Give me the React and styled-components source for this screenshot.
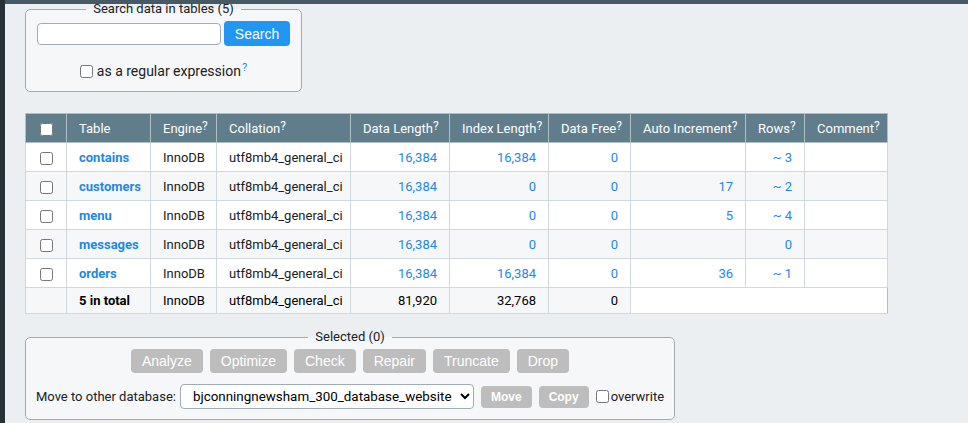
import styled, { createGlobalStyle } from "styled-components";

const GlobalStyle = createGlobalStyle`
    html, body {
        margin: 0;
        background: #eceff1;
    }
    body {
        font-family: Roboto, "Liberation Sans", Arial, sans-serif;
        font-size: 14px;
        color: #212121;
    }
`;

const TABLES = [
    { name: "contains", data: "16,384", index: "16,384", free: "0", auto: "", rows: "~ 3" },
    { name: "customers", data: "16,384", index: "0", free: "0", auto: "17", rows: "~ 2" },
    { name: "menu", data: "16,384", index: "0", free: "0", auto: "5", rows: "~ 4" },
    { name: "messages", data: "16,384", index: "0", free: "0", auto: "", rows: "0" },
    { name: "orders", data: "16,384", index: "16,384", free: "0", auto: "36", rows: "~ 1" },
];

const COLS = [41, 84, 66, 134, 99, 99, 82, 115, 59, 83];

const ACTIONS = ["Analyze", "Optimize", "Check", "Repair", "Truncate", "Drop"];

const App = () => {
    return (
        <>
            <GlobalStyle />
            <S.Page>
                <S.SideStrip />
                <S.TopBar />
                <S.Main>
                    <S.Fieldset $width="277px">
                        <S.Legend>Search data in tables (5)</S.Legend>
                        <S.SearchRow>
                            <S.TextInput type="text" />
                            <S.BlueButton>Search</S.BlueButton>
                        </S.SearchRow>
                        <S.RegexRow>
                            <S.Check type="checkbox" />
                            as a regular expression<S.HelpLink>?</S.HelpLink>
                        </S.RegexRow>
                    </S.Fieldset>

                    <S.Table>
                        <colgroup>
                            {COLS.map((w, i) => (
                                <S.Col key={i} $width={w} />
                            ))}
                        </colgroup>
                        <thead>
                            <tr>
                                <S.Th $center>
                                    <S.Check type="checkbox" $cell />
                                </S.Th>
                                <S.Th>Table</S.Th>
                                <S.Th>Engine<S.Sup>?</S.Sup></S.Th>
                                <S.Th>Collation<S.Sup>?</S.Sup></S.Th>
                                <S.Th>Data Length<S.Sup>?</S.Sup></S.Th>
                                <S.Th>Index Length<S.Sup>?</S.Sup></S.Th>
                                <S.Th>Data Free<S.Sup>?</S.Sup></S.Th>
                                <S.Th>Auto Increment<S.Sup>?</S.Sup></S.Th>
                                <S.Th>Rows<S.Sup>?</S.Sup></S.Th>
                                <S.Th>Comment<S.Sup>?</S.Sup></S.Th>
                            </tr>
                        </thead>
                        <tbody>
                            {TABLES.map((t, i) => (
                                <S.Row key={t.name} $odd={i % 2 === 1}>
                                    <S.Td $center>
                                        <S.Check type="checkbox" $cell />
                                    </S.Td>
                                    <S.Td>
                                        <S.NameLink>{t.name}</S.NameLink>
                                    </S.Td>
                                    <S.Td>InnoDB</S.Td>
                                    <S.Td>utf8mb4_general_ci</S.Td>
                                    <S.Td $right><S.Link>{t.data}</S.Link></S.Td>
                                    <S.Td $right><S.Link>{t.index}</S.Link></S.Td>
                                    <S.Td $right><S.Link>{t.free}</S.Link></S.Td>
                                    <S.Td $right><S.Link>{t.auto}</S.Link></S.Td>
                                    <S.Td $right><S.Link>{t.rows}</S.Link></S.Td>
                                    <S.Td></S.Td>
                                </S.Row>
                            ))}
                            <S.TotalRow>
                                <S.TotalTd></S.TotalTd>
                                <S.TotalTd $bold>5 in total</S.TotalTd>
                                <S.TotalTd>InnoDB</S.TotalTd>
                                <S.TotalTd>utf8mb4_general_ci</S.TotalTd>
                                <S.TotalTd $right>81,920</S.TotalTd>
                                <S.TotalTd $right>32,768</S.TotalTd>
                                <S.TotalTd $right>0</S.TotalTd>
                                <S.BlankTd colSpan={3}></S.BlankTd>
                            </S.TotalRow>
                        </tbody>
                    </S.Table>

                    <S.Fieldset $width="650px" $gap>
                        <S.Legend>Selected (0)</S.Legend>
                        <S.ActionRow>
                            {ACTIONS.map((a) => (
                                <S.GrayButton key={a}>{a}</S.GrayButton>
                            ))}
                        </S.ActionRow>
                        <S.MoveRow>
                            <S.MoveLabel>Move to other database:</S.MoveLabel>
                            <S.Select defaultValue="web">
                                <option value="web">bjconningnewsham_300_database_website</option>
                            </S.Select>
                            <S.SmallButton>Move</S.SmallButton>
                            <S.SmallButton>Copy</S.SmallButton>
                            <S.OverwriteLabel>
                                <S.Check type="checkbox" $tight />
                                overwrite
                            </S.OverwriteLabel>
                        </S.MoveRow>
                    </S.Fieldset>
                </S.Main>
            </S.Page>
        </>
    );
};
export default App;

const Page = styled.div`
    display: flex;
    min-height: 100vh;
`;
const SideStrip = styled.div`
    width: 5px;
    flex: none;
    background: #263238;
`;
const TopBar = styled.div`
    position: fixed;
    top: 0;
    left: 5px;
    right: 0;
    height: 4px;
    background: #455a64;
`;
const Main = styled.div`
    flex: 1;
    padding: 1px 0 0 20px;
`;
const Fieldset = styled.fieldset`
    box-sizing: border-box;
    width: ${(p) => p.$width};
    min-width: 0;
    margin: ${(p) => (p.$gap ? "15px 0 0" : "0")};
    padding: 4px 12px 10px;
    border: 1px solid #9eadb5;
    border-radius: 5px;
    background: #f5f7f8;
    display: flex;
    flex-direction: column;
    align-items: center;
`;
const Legend = styled.legend`
    margin: 0 auto;
    padding: 0 7px;
    font-size: 13px;
    line-height: 16px;
    color: #212121;
`;
const SearchRow = styled.div`
    display: flex;
    align-items: center;
    gap: 3px;
`;
const TextInput = styled.input`
    box-sizing: border-box;
    width: 184px;
    height: 22px;
    margin: 0;
    border: 1px solid #9eadb5;
    border-radius: 4px;
    background: #fff;
`;
const BlueButton = styled.button`
    height: 25px;
    padding: 0 11px;
    border: none;
    border-radius: 4px;
    background: #2196f3;
    color: #fff;
    font-family: "Liberation Sans", Arial, sans-serif;
    font-size: 14px;
`;
const RegexRow = styled.label`
    display: flex;
    align-items: center;
    margin-top: 15px;
    font-size: 14px;
    line-height: 20px;
    white-space: nowrap;
`;
const Check = styled.input`
    width: 13px;
    height: 13px;
    margin: ${(p) => (p.$cell ? "0" : p.$tight ? "0 2px 0 0" : "0 4px 0 0")};
    vertical-align: middle;
`;
const HelpLink = styled.sup`
    align-self: flex-start;
    color: #1e88e5;
    font-size: 11px;
    line-height: 11px;
    margin-left: 1px;
    margin-top: 1px;
`;
const Table = styled.table`
    margin-top: 21px;
    width: 862px;
    table-layout: fixed;
    border-collapse: collapse;
    border: 1px solid #b0bec5;
    font-size: 13px;
    background: #fff;
`;
const Col = styled.col`
    width: ${(p) => p.$width}px;
`;
const Th = styled.th`
    height: 28px;
    padding: ${(p) => (p.$center ? "0" : "0 12px")};
    background: #607d8b;
    color: #fff;
    font-weight: normal;
    text-align: ${(p) => (p.$center ? "center" : "left")};
    border: 1px solid #b0bec5;
    white-space: nowrap;
`;
const Sup = styled.sup`
    font-size: 12px;
    line-height: 0;
    vertical-align: 3px;
`;
const Row = styled.tr`
    background: ${(p) => (p.$odd ? "#f5f7f8" : "#fff")};
`;
const Td = styled.td`
    height: 28px;
    padding: ${(p) => (p.$center ? "0" : "0 12px")};
    border: 1px solid #cfd8dc;
    text-align: ${(p) => (p.$center ? "center" : p.$right ? "right" : "left")};
    white-space: nowrap;
`;
const Link = styled.a`
    color: #1e88e5;
    text-decoration: none;
`;
const NameLink = styled(Link)`
    font-weight: bold;
`;
const TotalRow = styled.tr`
    background: #f5f7f8;
`;
const TotalTd = styled.td`
    height: 25px;
    padding: 0 12px;
    border: 1px solid #cfd8dc;
    text-align: ${(p) => (p.$right ? "right" : "left")};
    font-weight: ${(p) => (p.$bold ? "bold" : "normal")};
    color: #000;
    white-space: nowrap;
`;
const BlankTd = styled.td`
    background: #fff;
    border: 1px solid #cfd8dc;
    border-left: none;
    border-right: 1px solid #b0bec5;
`;
const ActionRow = styled.div`
    display: flex;
    justify-content: center;
    gap: 7px;
`;
const GrayButton = styled.button`
    height: 24px;
    padding: 0 11px;
    border: none;
    border-radius: 4px;
    background: #bdbdbd;
    color: #fff;
    font-family: "Liberation Sans", Arial, sans-serif;
    font-size: 14px;
`;
const MoveRow = styled.div`
    display: flex;
    align-items: center;
    margin-top: 11px;
    font-size: 13px;
    white-space: nowrap;
`;
const MoveLabel = styled.span`
    margin-right: 4px;
`;
const Select = styled.select`
    box-sizing: border-box;
    width: 294px;
    height: 25px;
    margin: 0 7px 0 0;
    padding: 0 4px 0 8px;
    border: 1px solid #9eadb5;
    border-radius: 4px;
    background: #fff;
    color: #000;
    font-family: Roboto, "Liberation Sans", Arial, sans-serif;
    font-size: 13.4px;
`;
const SmallButton = styled.button`
    height: 22px;
    padding: 0 10px;
    margin-right: 7px;
    border: none;
    border-radius: 4px;
    background: #bdbdbd;
    color: #fff;
    font-family: "Liberation Sans", Arial, sans-serif;
    font-size: 12px;
    font-weight: bold;
`;
const OverwriteLabel = styled.label`
    display: flex;
    align-items: center;
    font-size: 13px;
`;

const S = {
    Page,
    SideStrip,
    TopBar,
    Main,
    Fieldset,
    Legend,
    SearchRow,
    TextInput,
    BlueButton,
    RegexRow,
    Check,
    HelpLink,
    Table,
    Col,
    Th,
    Sup,
    Row,
    Td,
    Link,
    NameLink,
    TotalRow,
    TotalTd,
    BlankTd,
    ActionRow,
    GrayButton,
    MoveRow,
    MoveLabel,
    Select,
    SmallButton,
    OverwriteLabel,
};
